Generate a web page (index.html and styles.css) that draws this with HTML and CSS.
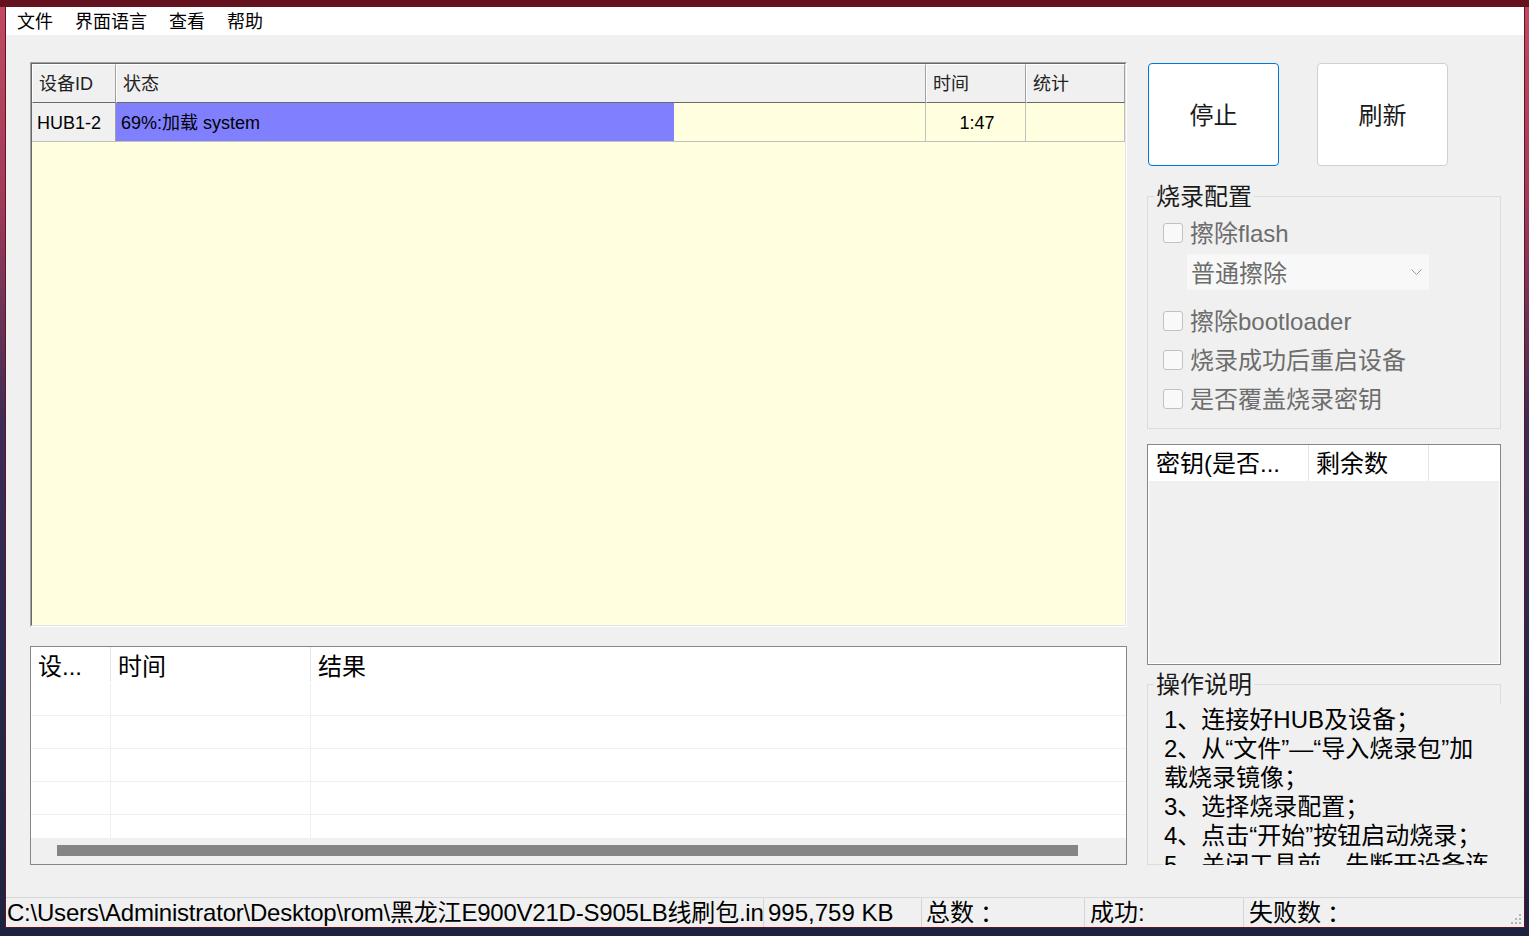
FILE: index.html
```html
<!DOCTYPE html>
<html lang="zh-CN">
<head>
<meta charset="utf-8">
<title>烧录工具</title>
<link rel="stylesheet" href="styles.css">
</head>
<body>
<div class="window">
  <div class="menubar">
    <span class="menu-item">文件</span>
    <span class="menu-item">界面语言</span>
    <span class="menu-item">查看</span>
    <span class="menu-item">帮助</span>
  </div>
  <div class="main">
    <div class="left">
      <div class="devgrid">
        <div class="devgrid-inner">
          <div class="dg-row">
            <div class="dg-hcell c1">设备ID</div>
            <div class="dg-hcell c2">状态</div>
            <div class="dg-hcell c3">时间</div>
            <div class="dg-hcell c4">统计</div>
          </div>
          <div class="dg-row">
            <div class="dg-cell c1 rowhead">HUB1-2</div>
            <div class="dg-cell c2 status"><div class="progress" style="width:69%"></div><span class="status-text">69%:加载 system</span></div>
            <div class="dg-cell c3 center">1:47</div>
            <div class="dg-cell c4"></div>
          </div>
        </div>
      </div>
      <div class="logtable">
        <div class="lt-head">
          <div class="lt-hcell l1">设...</div>
          <div class="lt-hcell l2">时间</div>
          <div class="lt-hcell l3">结果</div>
        </div>
        <div class="lt-row"><div class="lt-cell l1"></div><div class="lt-cell l2"></div><div class="lt-cell l3"></div></div>
        <div class="lt-row"><div class="lt-cell l1"></div><div class="lt-cell l2"></div><div class="lt-cell l3"></div></div>
        <div class="lt-row"><div class="lt-cell l1"></div><div class="lt-cell l2"></div><div class="lt-cell l3"></div></div>
        <div class="lt-row"><div class="lt-cell l1"></div><div class="lt-cell l2"></div><div class="lt-cell l3"></div></div>
        <div class="lt-row last"><div class="lt-cell l1"></div><div class="lt-cell l2"></div><div class="lt-cell l3"></div></div>
        <div class="hscroll"><div class="hthumb"></div></div>
      </div>
    </div>
    <div class="right">
      <div class="buttons">
        <button class="btn primary">停止</button>
        <button class="btn">刷新</button>
      </div>
      <fieldset class="group cfg">
        <legend>烧录配置</legend>
        <div class="chk-row first"><span class="box"></span><span class="chk-label">擦除flash</span></div>
        <div class="combo"><span>普通擦除</span><svg width="11" height="7" viewBox="0 0 11 7"><path d="M0.5 0.5 L5.5 5.5 L10.5 0.5" fill="none" stroke="#9a9a9a" stroke-width="1"/></svg></div>
        <div class="chk-row boot"><span class="box"></span><span class="chk-label">擦除bootloader</span></div>
        <div class="chk-row"><span class="box"></span><span class="chk-label">烧录成功后重启设备</span></div>
        <div class="chk-row"><span class="box"></span><span class="chk-label">是否覆盖烧录密钥</span></div>
      </fieldset>
      <div class="keytable">
        <div class="kt-head">
          <div class="kt-hcell k1">密钥(是否...</div>
          <div class="kt-hcell k2">剩余数</div>
          <div class="kt-hcell k3"></div>
        </div>
        <div class="kt-body"></div>
      </div>
      <fieldset class="group help">
        <legend>操作说明</legend>
        <div class="helptext">1、连接好HUB及设备；<br>2、从“文件”—“导入烧录包”加<br>载烧录镜像；<br>3、选择烧录配置；<br>4、点击“开始”按钮启动烧录；<br>5、关闭工具前，先断开设备连</div>
      </fieldset>
    </div>
  </div>
  <div class="statusbar">
    <div class="sb-panel p1">C:\Users\Administrator\Desktop\rom\黑龙江E900V21D-S905LB线刷包.in</div>
    <div class="sb-panel p2">995,759 KB</div>
    <div class="sb-panel p3">总数<span class="fwcolon" lang="ja">：</span></div>
    <div class="sb-panel p4">成功:</div>
    <div class="sb-panel p5">失败数<span class="fwcolon" lang="ja">：</span></div>
    <svg class="grip" width="10" height="10" viewBox="0 0 10 10">
      <rect x="8" y="0" width="2" height="2" fill="#b4b4b4"/>
      <rect x="4" y="4" width="2" height="2" fill="#b4b4b4"/>
      <rect x="8" y="4" width="2" height="2" fill="#b4b4b4"/>
      <rect x="0" y="8" width="2" height="2" fill="#b4b4b4"/>
      <rect x="4" y="8" width="2" height="2" fill="#b4b4b4"/>
      <rect x="8" y="8" width="2" height="2" fill="#b4b4b4"/>
    </svg>
  </div>
</div>
</body>
</html>
```
FILE: styles.css
```css
* { box-sizing: border-box; }
html, body { margin: 0; padding: 0; }
body {
  width: 1529px;
  height: 936px;
  overflow: hidden;
  font-family: "Liberation Sans", "Noto Sans CJK SC", sans-serif;
  background:
    linear-gradient(#64121f 0 7px, transparent 7px),
    linear-gradient(180deg, #c24a63 0px, #a03a5a 200px, #3c2c56 420px, #252a4c 650px, #1c2240 936px);
}
.window {
  margin-left: 5px;
  width: 1520px;
  height: 928px;
  border: 1px solid #64121f;
  border-top-width: 7px;
  background: #f0f0f0;
  display: flex;
  flex-direction: column;
}
.menubar {
  height: 28px;
  background: #fff;
  display: flex;
  font-size: 18px;
  line-height: 28px;
  padding-top: 1px;
  color: #000;
}
.menu-item { padding: 0 11px; }

.main {
  height: 862px;
  display: grid;
  grid-template-columns: 1097px 354px;
  column-gap: 20px;
  padding: 27px 0 0 24px;
}
.left { display: flex; flex-direction: column; gap: 19px; }

/* device grid */
.devgrid {
  width: 1097px;
  height: 565px;
  border: 1px solid;
  border-color: #a0a0a0 #ffffff #ffffff #a0a0a0;
}
.devgrid-inner {
  height: 100%;
  border: 1px solid;
  border-color: #696969 #e3e3e3 #e3e3e3 #696969;
  background: #ffffe0;
}
.dg-row { display: flex; height: 39px; }
.c1 { width: 84px; }
.c2 { width: 810px; }
.c3 { width: 100px; }
.c4 { width: 99px; }
.dg-hcell {
  height: 39px;
  background: #f0f0f0;
  border-top: 1px solid #fff;
  border-left: 1px solid #fff;
  border-right: 1px solid #a0a0a0;
  border-bottom: 1px solid #696969;
  padding: 2px 0 0 6px;
  font-size: 18px;
  line-height: 35px;
  color: #222;
}
.dg-cell {
  height: 39px;
  border-right: 1px solid #c0c0c0;
  border-bottom: 1px solid #c0c0c0;
  padding-top: 2px;
  font-size: 18px;
  line-height: 36px;
  color: #000;
}
.rowhead { background: #f0f0f0; padding-left: 5px; border-right-color: #a0a0a0; }
.status { position: relative; }
.progress {
  position: absolute;
  left: 0; top: 0; bottom: 0;
  background: #8080ff;
}
.status-text { position: relative; padding-left: 5px; }
.center { text-align: center; padding-left: 3px; }

/* log table */
.logtable {
  width: 1097px;
  height: 219px;
  border: 1px solid #828790;
  background: #fff;
  display: flex;
  flex-direction: column;
}
.lt-head { display: flex; height: 36px; }
.l1 { width: 80px; }
.l2 { width: 200px; }
.l3 { flex: 1; }
.lt-hcell {
  font-size: 24px;
  line-height: 36px;
  padding-top: 2px;
  color: #000;
  padding-left: 7px;
}
.lt-hcell.l1, .lt-hcell.l2 { border-right: 1px solid #e5e5e5; height: 35px; }
.lt-row { display: flex; height: 33px; border-bottom: 1px solid #f0f0f0; }
.lt-row.last { height: 23px; border-bottom: none; }
.lt-cell.l1, .lt-cell.l2 { border-right: 1px solid #f0f0f0; }
.hscroll {
  height: 26px;
  background: #f0f0f0;
  padding: 7px 0 0 26px;
}
.hthumb { width: 1021px; height: 11px; background: #858585; }

/* right column */
.right { display: flex; flex-direction: column; }
.buttons { display: flex; gap: 38px; margin-top: 1px; padding-left: 1px; }
.btn {
  width: 131px;
  height: 103px;
  background: #fff;
  border: 1px solid #d0d0d0;
  border-radius: 4px;
  font-family: "Liberation Sans", "Noto Sans CJK SC", sans-serif;
  font-size: 24px;
  color: #1a1a1a;
  padding: 0 0 2px 0;
}
.btn.primary { border-color: #0078d7; }

.group {
  margin: 0;
  border: 1px solid #dcdcdc;
  min-width: 0;
}
.group legend {
  padding: 0 2px;
  font-size: 24px;
  line-height: 29px;
  color: #1a1a1a;
}
.cfg { margin-top: 16px; padding: 0 0 11px 6px; }
.chk-row {
  display: flex;
  align-items: center;
  height: 39px;
  font-size: 24px;
  color: #6d6d6d;
}
.chk-row.first { margin-top: 1px; }
.chk-row.boot { margin-top: 10px; }
.box {
  width: 20px;
  height: 20px;
  margin-left: 9px;
  margin-top: 3px;
  border: 1px solid #c2c2c2;
  border-radius: 3px;
  background: #f9f9f9;
}
.chk-label { margin-left: 7px; }
.combo {
  margin: 3px 0 0 33px;
  width: 242px;
  height: 36px;
  background: #f8f8f8;
  display: flex;
  align-items: center;
  justify-content: space-between;
  padding: 0 7px 2px 4px;
  font-size: 24px;
  color: #6d6d6d;
}
.combo svg { margin-top: 2px; }

.keytable {
  margin-top: 15px;
  height: 221px;
  border: 1px solid #828790;
  background: #fff;
  display: flex;
  flex-direction: column;
}
.kt-head { display: flex; height: 36px; }
.kt-hcell { font-size: 24px; line-height: 36px; padding-top: 1px; color: #000; }
.k1 { width: 161px; padding-left: 8px; border-right: 1px solid #e5e5e5; }
.k2 { width: 120px; padding-left: 7px; border-right: 1px solid #e5e5e5; }
.k3 { flex: 1; }
.kt-body { flex: 1; background: #f0f0f0; margin: 0 1px 1px 1px; }

.help { margin-top: 5px; padding: 0 0 0 6px; }
.helptext {
  margin: 5px -3px -1px 9px;
  height: 161px;
  overflow: hidden;
  background: #f0f0f0;
  padding: 1px 0 0 1px;
  font-size: 24px;
  line-height: 29px;
  color: #000;
  white-space: nowrap;
}

/* status bar */
.statusbar {
  height: 30px;
  border-top: 1px solid #d9d9d9;
  display: flex;
  font-size: 24px;
  line-height: 29px;
  color: #000;
}
.sb-panel {
  border-right: 1px solid #d4d4d4;
  white-space: nowrap;
  overflow: hidden;
  padding-left: 5px;
}
.p1 { width: 758px; padding-left: 1px; letter-spacing: -0.22px; }
.p2 { width: 158px; padding-left: 4px; }
.p3 { width: 163px; padding-left: 4px; }
.p4 { width: 159px; }
.p5 { flex: 1; border-right: none; }
.fwcolon {
  display: inline-block;
  width: 24px;
  text-align: center;
  line-height: 29px;
  vertical-align: top;
  font-family: "Noto Sans CJK JP", sans-serif;
  text-spacing-trim: space-all;
}
.grip { align-self: flex-end; margin: 0 3px 3px 0; flex: none; }
```
